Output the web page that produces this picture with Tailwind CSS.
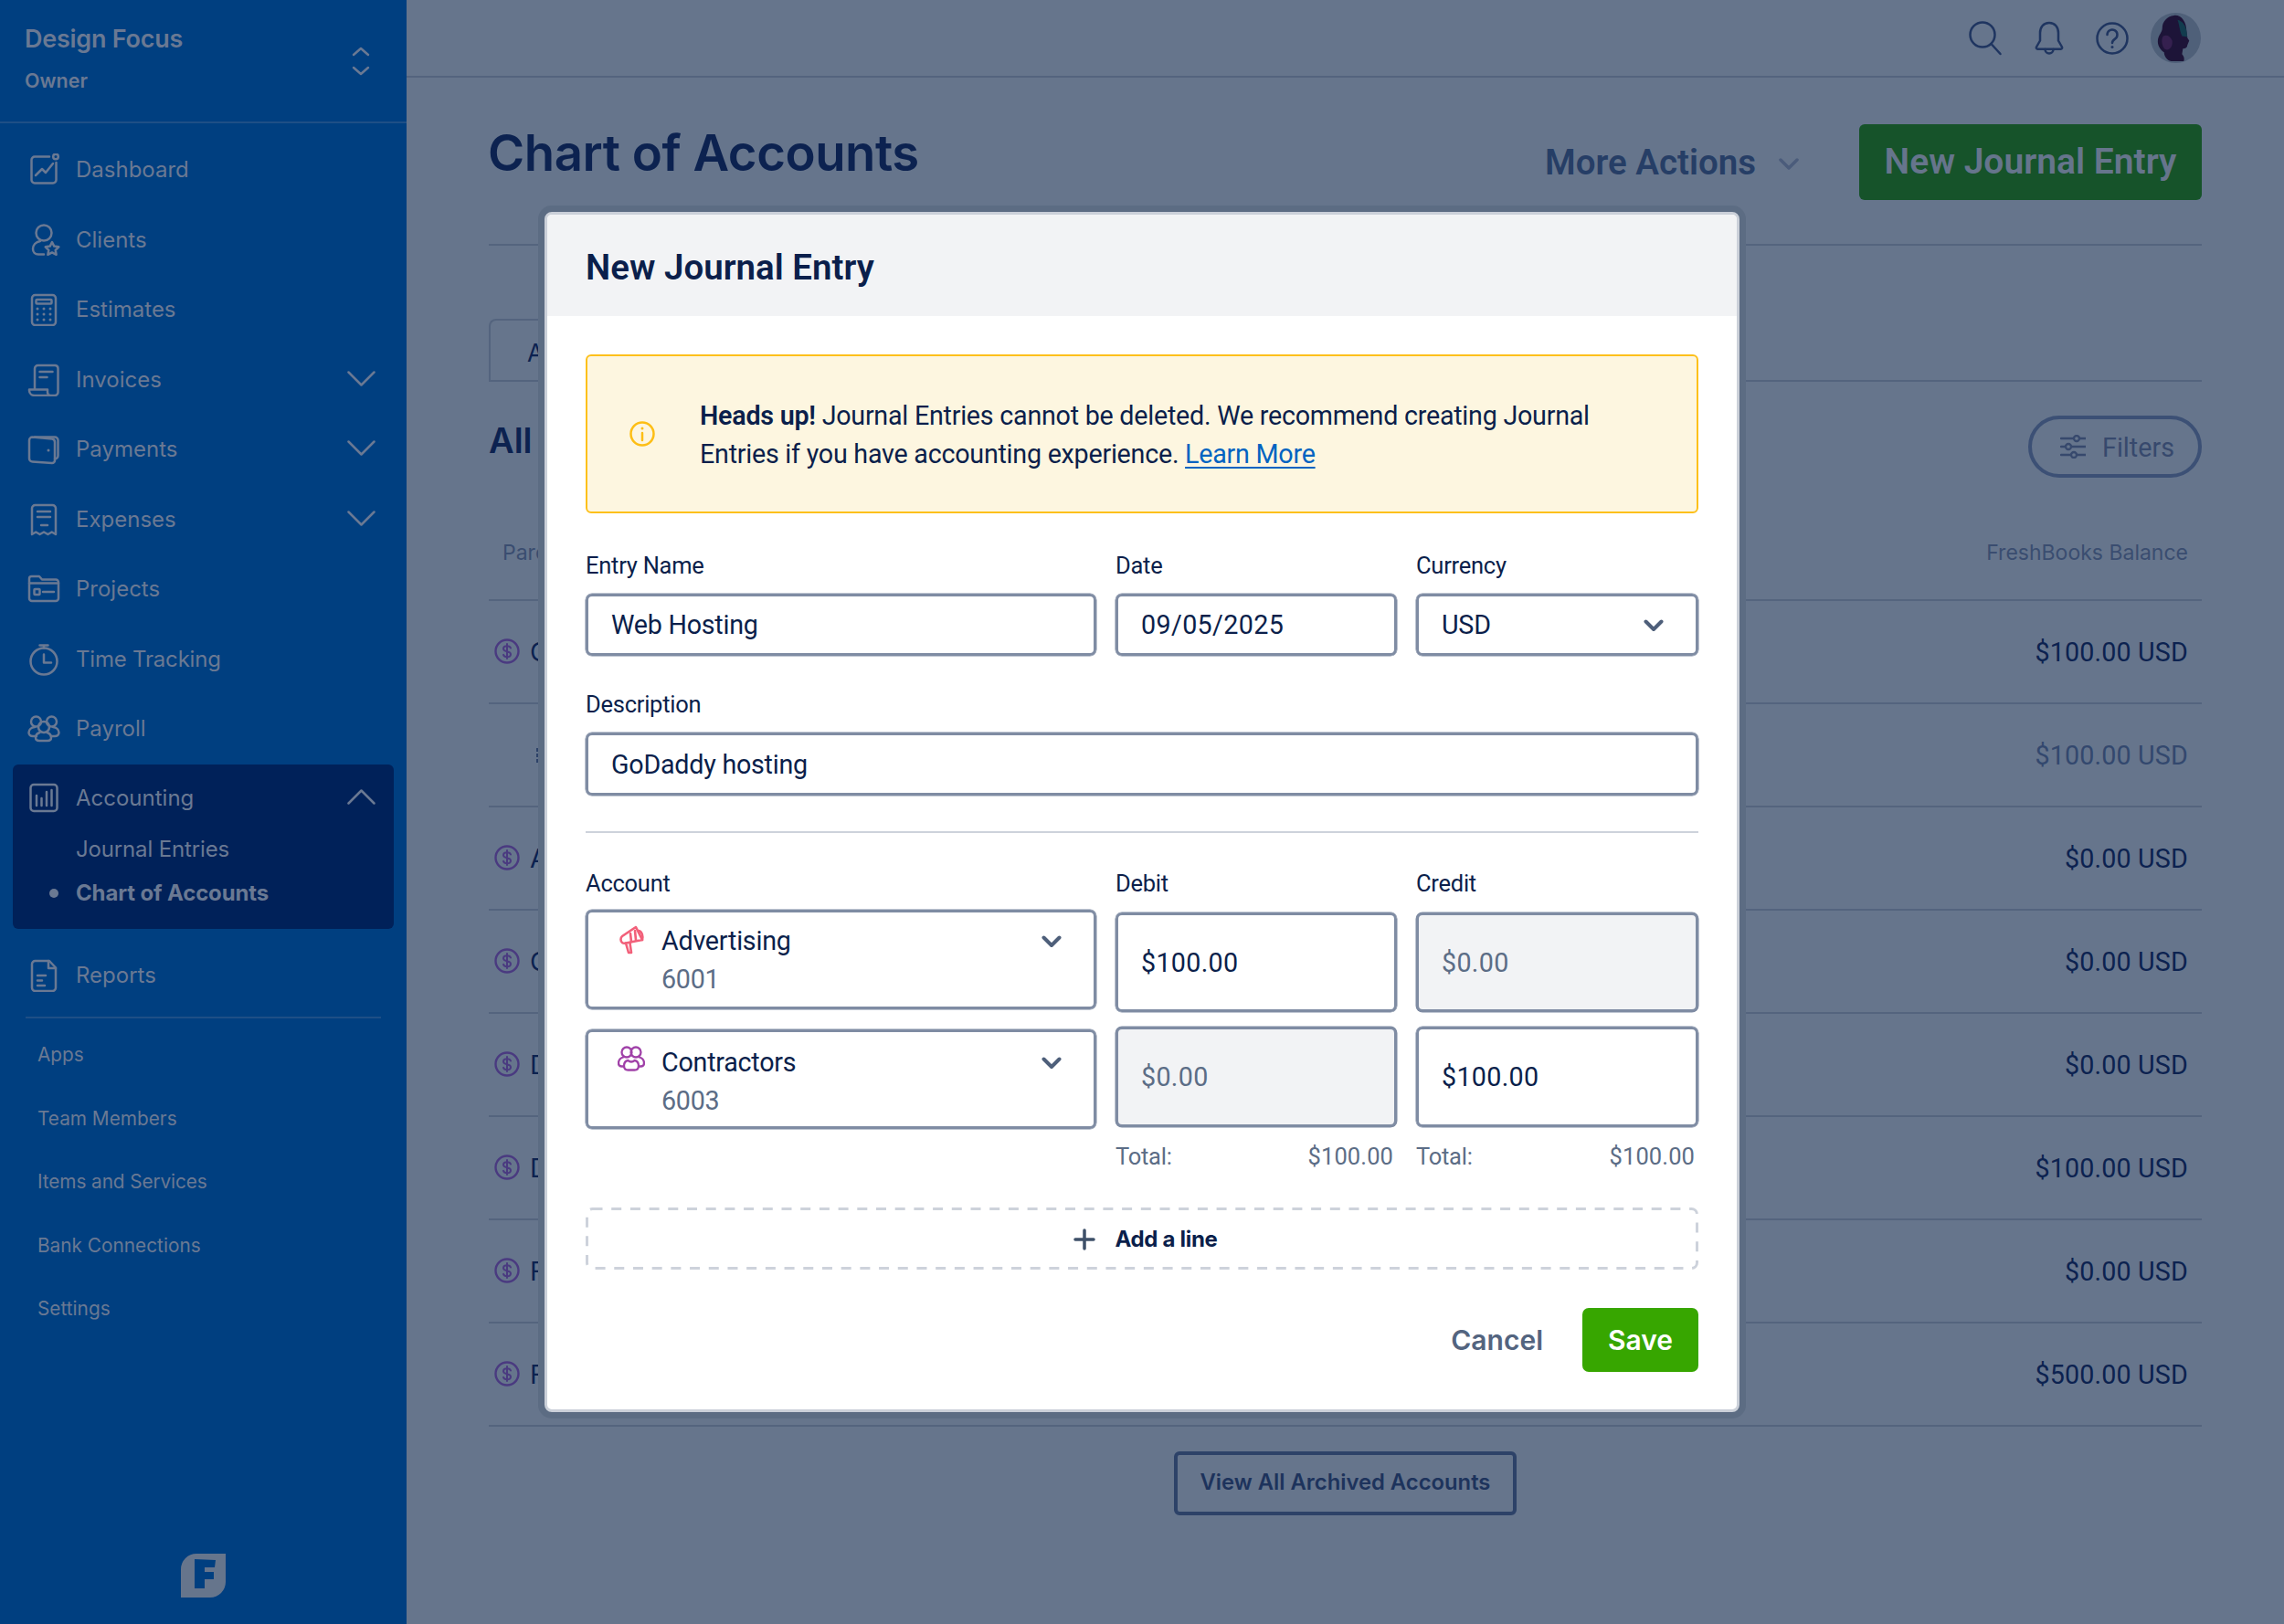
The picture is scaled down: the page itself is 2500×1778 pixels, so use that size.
<!doctype html>
<html lang="en">
<head>
<meta charset="utf-8">
<title>Chart of Accounts</title>
<script src="https://cdn.jsdelivr.net/npm/@tailwindcss/browser@4"></script>
</head>
<body class="m-0">
<div class="relative flex w-[2500px] h-[1778px] overflow-hidden bg-[#66758c] font-['Inter',sans-serif]">

  <!-- Sidebar -->
  <aside class="w-[445px] h-full shrink-0 bg-[#003f80] text-[#6a7993] flex flex-col relative">
    <div class="h-[135px] border-b-2 border-[#1e4f86] flex items-start justify-between pl-[27px] pr-[40px]">
      <div>
        <div class="mt-[25px] text-[27px] leading-[36px] font-semibold tracking-[-0.25px]">Design Focus</div>
        <div class="mt-[13px] text-[21.5px] leading-[28px] font-semibold">Owner</div>
      </div>
      <svg class="mt-[50px]" width="20" height="34" viewBox="0 0 20 34" fill="none" stroke="#6a7993" stroke-width="2.5" stroke-linecap="round" stroke-linejoin="round"><path d="M2 10 10 3l8 7M2 24l8 7 8-7"/></svg>
    </div>
    <nav class="pt-[13px] text-[24px] flex flex-col">
      <a class="h-[76.5px] pl-[30px] flex items-center gap-[17px]"><svg width="36" height="36" viewBox="0 0 36 36" fill="none" stroke="#6a7993" stroke-width="2.5" stroke-linecap="round" stroke-linejoin="round"><path d="M24 3.500H8A3.500 3.500 0 0 0 4.500 7v22A3.500 3.500 0 0 0 8 32.500h20a3.500 3.500 0 0 0 3.500-3.500V10"/><path d="m9 24 7-7 4 4 8-10"/><circle cx="31" cy="3.500" r="2.800"/></svg><span>Dashboard</span></a>
      <a class="h-[76.5px] pl-[30px] flex items-center gap-[17px]"><svg width="36" height="36" viewBox="0 0 36 36" fill="none" stroke="#6a7993" stroke-width="2.500" stroke-linecap="round" stroke-linejoin="round"><circle cx="18" cy="10" r="8.500"/><path d="M14 19c-5 1-8 4.500-8 8.500 0 3.500 2.500 6 6 6h6"/><path d="m27 20 2.300 4.600 5 .7-3.600 3.500.9 5-4.600-2.400-4.600 2.400.9-5-3.600-3.500 5-.7z"/></svg><span>Clients</span></a>
      <a class="h-[76.5px] pl-[30px] flex items-center gap-[17px]"><svg width="36" height="36" viewBox="0 0 36 36" fill="none" stroke="#6a7993" stroke-width="2.500" stroke-linecap="round" stroke-linejoin="round"><rect x="5" y="2" width="26" height="33" rx="3.500"/><rect x="9.500" y="7" width="17" height="4.500" rx="1"/><path stroke-width="3" d="M11 17h.01M18 17h.01M25 17h.01M11 23h.01M18 23h.01M25 23h.01M11 29h.01M18 29h.01M25 29h.01"/></svg><span>Estimates</span></a>
      <a class="h-[76.5px] pl-[30px] flex items-center gap-[17px] relative"><svg width="36" height="36" viewBox="0 0 36 36" fill="none" stroke="#6a7993" stroke-width="2.500" stroke-linecap="round" stroke-linejoin="round"><path d="M8 27V5.500A3.500 3.500 0 0 1 11.500 2h19A3.500 3.500 0 0 1 33.500 5.500v26a3.500 3.500 0 0 1-3.500 3.500H8c-3 0-6-2-6-5.500V28.500h20v3c0 2 1.500 3.500 3.500 3.500"/><path d="M13.500 9h14M13.500 15h8"/></svg><span>Invoices</span><svg class="absolute left-[380px] top-[28px]" width="31" height="17" viewBox="0 0 31 17" fill="none" stroke="#6a7993" stroke-width="2.500" stroke-linecap="round" stroke-linejoin="round"><path d="m1.500 1.500 14 14 14-14"/></svg></a>
      <a class="h-[76.5px] pl-[30px] flex items-center gap-[17px] relative"><svg width="36" height="36" viewBox="0 0 36 36" fill="none" stroke="#6a7993" stroke-width="2.500" stroke-linecap="round" stroke-linejoin="round"><path d="M5.500 4.500 27 6.500a3.500 3.500 0 0 1 3 3.500v20a3 3 0 0 1-3 3l-21.500-1.500A3.500 3.500 0 0 1 2 28V8a3.500 3.500 0 0 1 3.500-3.500Z"/><path d="M8 4.500h22a3.500 3.500 0 0 1 3.500 3.500v17a3.500 3.500 0 0 1-3.500 3.500"/><path stroke-width="3" d="M23 19h.01"/></svg><span>Payments</span><svg class="absolute left-[380px] top-[28px]" width="31" height="17" viewBox="0 0 31 17" fill="none" stroke="#6a7993" stroke-width="2.500" stroke-linecap="round" stroke-linejoin="round"><path d="m1.500 1.500 14 14 14-14"/></svg></a>
      <a class="h-[76.5px] pl-[30px] flex items-center gap-[17px] relative"><svg width="36" height="36" viewBox="0 0 36 36" fill="none" stroke="#6a7993" stroke-width="2.500" stroke-linecap="round" stroke-linejoin="round"><path d="M5 34V5.500A3.500 3.500 0 0 1 8.500 2h19A3.500 3.500 0 0 1 31 5.500V34l-4.300-2.500-4.300 2.500-4.400-2.500-4.400 2.500-4.300-2.500z"/><path d="M11 9h14M11 15h14M15 24h7"/></svg><span>Expenses</span><svg class="absolute left-[380px] top-[28px]" width="31" height="17" viewBox="0 0 31 17" fill="none" stroke="#6a7993" stroke-width="2.500" stroke-linecap="round" stroke-linejoin="round"><path d="m1.500 1.500 14 14 14-14"/></svg></a>
      <a class="h-[76.5px] pl-[30px] flex items-center gap-[17px]"><svg width="36" height="36" viewBox="0 0 36 36" fill="none" stroke="#6a7993" stroke-width="2.500" stroke-linecap="round" stroke-linejoin="round"><path d="M2 28V6.500A2.500 2.500 0 0 1 4.500 4h8.500l3 3.500H31A3 3 0 0 1 34 10.500v17.500a3 3 0 0 1-3 3H5A3 3 0 0 1 2 28Z"/><path d="M2 11.500h32M17 21h12"/><rect x="7.500" y="18" width="6" height="6" rx=".8"/></svg><span>Projects</span></a>
      <a class="h-[76.5px] pl-[30px] flex items-center gap-[17px]"><svg width="36" height="36" viewBox="0 0 36 36" fill="none" stroke="#6a7993" stroke-width="2.500" stroke-linecap="round" stroke-linejoin="round"><circle cx="18" cy="20" r="14.500"/><path d="M13.500 2.500h9M18 2.500v3M18 12.500v9h8"/></svg><span class="tracking-[-0.2px]">Time Tracking</span></a>
      <a class="h-[76.5px] pl-[30px] flex items-center gap-[17px]"><svg width="36" height="36" viewBox="0 0 36 36" fill="none" stroke="#6a7993" stroke-width="2.500" stroke-linecap="round" stroke-linejoin="round"><circle cx="9.500" cy="10" r="5.500"/><circle cx="26.500" cy="10" r="5.500"/><circle cx="18" cy="16" r="6"/><path d="M8 16c-4 .5-6.500 3-6.500 6 0 2.500 2 4 4.500 4h4M28 16c4 .5 6.500 3 6.500 6 0 2.500-2 4-4.500 4h-4"/><path d="M13.500 22c-3 1-4.500 3.500-4.500 5.500 0 2 1.500 3.500 4 3.500h9c2.500 0 4-1.500 4-3.500 0-2-1.500-4.500-4.500-5.500"/></svg><span>Payroll</span></a>
    </nav>
    <div class="mx-[14px] mt-0 h-[180px] bg-[#002159] rounded-[6px] relative">
      <a class="h-[74px] pl-[16px] flex items-center gap-[17px]"><svg width="36" height="36" viewBox="0 0 36 36" fill="none" stroke="#6a7993" stroke-width="2.500" stroke-linecap="round" stroke-linejoin="round"><rect x="3.500" y="3" width="29" height="29" rx="3.500"/><path d="M10 15v11M15.500 18v8M21 11v15M26.500 9v17"/></svg><span class="text-[24px]">Accounting</span></a>
      <svg class="absolute left-[366px] top-[27px]" width="31" height="17" viewBox="0 0 31 17" fill="none" stroke="#6a7993" stroke-width="2.500" stroke-linecap="round" stroke-linejoin="round"><path d="m1.500 15.500 14-14 14 14"/></svg>
      <div class="pl-[69px] text-[24px] leading-[36px] mt-[1px] tracking-[-0.15px]">Journal Entries</div>
      <div class="pl-[40px] mt-[12px] flex items-center text-[24px] leading-[36px] font-bold tracking-[-0.15px]"><span class="w-[10px] h-[10px] rounded-full bg-[#6a7993] mr-[19px]"></span>Chart of Accounts</div>
    </div>
    <a class="mt-[13px] h-[76.5px] pl-[30px] flex items-center gap-[17px] text-[24px]"><svg width="36" height="36" viewBox="0 0 36 36" fill="none" stroke="#6a7993" stroke-width="2.500" stroke-linecap="round" stroke-linejoin="round"><path d="M8.500 2H24l7 7.500V31.500A3.500 3.500 0 0 1 27.500 35h-19A3.500 3.500 0 0 1 5 31.500v-26A3.500 3.500 0 0 1 8.500 2Z"/><path d="M23 2v8h8M11 18h9M11 23.500h5M11 29h8"/></svg><span>Reports</span></a>
    <div class="mx-[28px] mt-[7px] border-t-2 border-[#1e4f86]"></div>
    <div class="pl-[41px] pt-[5px] text-[20.8px] flex flex-col">
      <a class="h-[69.5px] flex items-center">Apps</a>
      <a class="h-[69.5px] flex items-center">Team Members</a>
      <a class="h-[69.5px] flex items-center tracking-[-0.1px]">Items and Services</a>
      <a class="h-[69.5px] flex items-center">Bank Connections</a>
      <a class="h-[69.5px] flex items-center">Settings</a>
    </div>
    <svg class="absolute left-[198px] top-[1701px]" width="49" height="48" viewBox="0 0 49 48"><path fill-rule="evenodd" fill="#66758c" d="M17 0H49V31a17 17 0 0 1-17 17H0V17A17 17 0 0 1 17 0Z M15 6V38H26V28H36V20H26V15H37L38 7Z"/></svg>
  </aside>

  <!-- Main -->
  <main class="flex-1 flex flex-col min-w-0">
    <header class="h-[85px] border-b-2 border-[#54647e] flex items-center justify-end pr-[91px] shrink-0 gap-[33px]">
      <svg width="38" height="38" viewBox="0 0 38 38" fill="none" stroke="#1f3560" stroke-width="2.500" stroke-linecap="round"><circle cx="16" cy="15" r="13.500"/><path d="m25.500 25 10 11"/></svg>
      <svg width="36" height="38" viewBox="0 0 36 38" fill="none" stroke="#1f3560" stroke-width="2.500" stroke-linecap="round" stroke-linejoin="round"><path d="M18 2c-6.500 0-10 5-10 11v8.500L4 28.500a1.500 1.500 0 0 0 1.300 2.200h25.400a1.500 1.500 0 0 0 1.300-2.200l-4-7V13c0-6-3.500-11-10-11Z"/><path d="M13.500 31a4.500 4.500 0 0 0 9 0"/></svg>
      <svg width="36" height="36" viewBox="0 0 36 36" fill="none" stroke="#1f3560" stroke-width="2.500" stroke-linecap="round" stroke-linejoin="round"><circle cx="18" cy="18" r="16.500"/><path d="M12.500 14a5.500 5.500 0 1 1 8.500 4.600c-2 1.300-3 2.200-3 4.400"/><path stroke-width="3" d="M18 27.500h.01"/></svg>
      <svg class="-ml-[9px]" width="55" height="55" viewBox="0 0 56 56"><circle cx="28" cy="28" r="28" fill="#4f6079"/><path fill="#1d1438" d="M26 3c-8 1-13 7-13 14 0 5-5 8-5 15 0 6 4 10 7 12 0 4 3 9 8 10h14c1-3 0-6-2-8l1-6c3 0 5-1 5-4l2-5-2-3-1-8C40 10 34 2 26 3Z"/><path fill="#123c4e" d="M30 8c5 1 9 6 10 12l1 7-6-1c-3-7-3-13-5-18Z"/><path fill="#35204f" d="M14 26c4-2 8 0 10 5 1 5-2 11-7 10-4-1-6-11-3-15Z"/></svg>
    </header>

    <div class="px-[90px] flex flex-col flex-1">
      <div class="h-[184px] shrink-0 border-b-2 border-[#54647e] flex items-start justify-between pt-[51px]">
        <h1 class="text-[54.5px] leading-[64px] font-semibold text-[#0c2250] tracking-[-0.45px] -mt-[1px] -ml-[1px]">Chart of Accounts</h1>
        <div class="flex items-center font-['Roboto',sans-serif]">
          <span class="text-[38.5px] leading-[83px] font-semibold text-[#263e66]">More Actions</span>
          <svg class="ml-[25px] mr-[66px] mt-[4px]" width="22" height="14" viewBox="0 0 22 14" fill="none" stroke="#4b5c7b" stroke-width="3.500" stroke-linecap="round" stroke-linejoin="round"><path d="m2 2 9 9 9-9"/></svg>
          <button class="w-[375px] h-[83px] rounded-[6px] bg-[#16532a] text-[#66758c] text-[39px] font-semibold">New Journal Entry</button>
        </div>
      </div>
      <div class="h-[149px] shrink-0 border-b-2 border-[#54647e] flex items-end">
        <div class="w-[100px] h-[67px] border-t-2 border-l-2 border-[#54647e] rounded-tl-[8px] pl-[40px] pt-[17px] text-[26.5px] leading-[36px] text-[#0c2250]">A</div>
      </div>
      <div class="h-[105px] pt-[37px] shrink-0 flex items-center justify-between">
        <h2 class="text-[38px] font-semibold text-[#0c2250] mb-[14px]">All A</h2>
        <div class="w-[190px] h-[68px] pl-[5px] pt-[3px] rounded-full border-[4px] border-[#3c5075] flex items-center justify-center gap-[18px] text-[28.7px] font-['Roboto',sans-serif] text-[#37496d]">
          <svg class="-mt-[3px]" width="28" height="26" viewBox="0 0 28 26" fill="none" stroke="#37496d" stroke-width="2.300" stroke-linecap="round"><path d="M1 4h28M1 13h28M1 22h28" /><circle cx="18" cy="4" r="3" fill="#66758c"/><circle cx="9" cy="13" r="3" fill="#66758c"/><circle cx="15" cy="22" r="3" fill="#66758c"/></svg>
          <span>Filters</span>
        </div>
      </div>
      <div class="h-[135px] shrink-0 border-b-2 border-[#54647e] flex items-end justify-between pl-[15px] pr-[15px] pb-[36px] text-[23px] leading-[30px] text-[#3a4d70]">
        <span>Pare</span><span>FreshBooks Balance</span>
      </div>
      <div class="flex flex-col text-[28.7px] text-[#0c2250] font-['Roboto',sans-serif]">
        <div class="h-[113px] border-b-2 border-[#54647e] flex items-center justify-between pl-[6px] pr-[15px]"><span class="flex items-center gap-[11px] font-['Inter',sans-serif]"><svg width="28" height="28" viewBox="0 0 28 28" fill="none" stroke="#4a3a80" stroke-width="2.400" stroke-linecap="round"><circle cx="14" cy="14" r="12.500"/><path stroke-width="2" d="M18 10.500c-.5-1.500-2-2.300-4-2.300-2.200 0-4 1-4 3s1.800 2.500 4 3 4 1 4 3-1.800 3-4 3c-2 0-3.500-.8-4-2.300M14 6v16"/></svg><span>C</span></span><span class="tracking-[0.15px] pt-[2px]">$100.00 USD</span></div>
        <div class="h-[113px] border-b-2 border-[#54647e] flex items-center justify-between pl-[52px] pr-[15px]"><span class="flex flex-col gap-[2px]"><span class="w-[5px] h-[4px] bg-[#2d4268]"></span><span class="w-[5px] h-[4px] bg-[#2d4268]"></span><span class="w-[5px] h-[4px] bg-[#2d4268]"></span></span><span class="text-[#33486e] tracking-[0.15px] pt-[2px]">$100.00 USD</span></div>
        <div class="h-[113px] border-b-2 border-[#54647e] flex items-center justify-between pl-[6px] pr-[15px]"><span class="flex items-center gap-[11px] font-['Inter',sans-serif]"><svg width="28" height="28" viewBox="0 0 28 28" fill="none" stroke="#4a3a80" stroke-width="2.400" stroke-linecap="round"><circle cx="14" cy="14" r="12.500"/><path stroke-width="2" d="M18 10.500c-.5-1.500-2-2.300-4-2.300-2.200 0-4 1-4 3s1.800 2.500 4 3 4 1 4 3-1.800 3-4 3c-2 0-3.500-.8-4-2.300M14 6v16"/></svg><span>A</span></span><span class="tracking-[0.15px] pt-[2px]">$0.00 USD</span></div>
        <div class="h-[113px] border-b-2 border-[#54647e] flex items-center justify-between pl-[6px] pr-[15px]"><span class="flex items-center gap-[11px] font-['Inter',sans-serif]"><svg width="28" height="28" viewBox="0 0 28 28" fill="none" stroke="#4a3a80" stroke-width="2.400" stroke-linecap="round"><circle cx="14" cy="14" r="12.500"/><path stroke-width="2" d="M18 10.500c-.5-1.500-2-2.300-4-2.300-2.200 0-4 1-4 3s1.800 2.500 4 3 4 1 4 3-1.800 3-4 3c-2 0-3.500-.8-4-2.300M14 6v16"/></svg><span>C</span></span><span class="tracking-[0.15px] pt-[2px]">$0.00 USD</span></div>
        <div class="h-[113px] border-b-2 border-[#54647e] flex items-center justify-between pl-[6px] pr-[15px]"><span class="flex items-center gap-[11px] font-['Inter',sans-serif]"><svg width="28" height="28" viewBox="0 0 28 28" fill="none" stroke="#4a3a80" stroke-width="2.400" stroke-linecap="round"><circle cx="14" cy="14" r="12.500"/><path stroke-width="2" d="M18 10.500c-.5-1.500-2-2.300-4-2.300-2.200 0-4 1-4 3s1.800 2.500 4 3 4 1 4 3-1.800 3-4 3c-2 0-3.500-.8-4-2.300M14 6v16"/></svg><span>D</span></span><span class="tracking-[0.15px] pt-[2px]">$0.00 USD</span></div>
        <div class="h-[113px] border-b-2 border-[#54647e] flex items-center justify-between pl-[6px] pr-[15px]"><span class="flex items-center gap-[11px] font-['Inter',sans-serif]"><svg width="28" height="28" viewBox="0 0 28 28" fill="none" stroke="#4a3a80" stroke-width="2.400" stroke-linecap="round"><circle cx="14" cy="14" r="12.500"/><path stroke-width="2" d="M18 10.500c-.5-1.500-2-2.300-4-2.300-2.200 0-4 1-4 3s1.800 2.500 4 3 4 1 4 3-1.800 3-4 3c-2 0-3.500-.8-4-2.300M14 6v16"/></svg><span>D</span></span><span class="tracking-[0.15px] pt-[2px]">$100.00 USD</span></div>
        <div class="h-[113px] border-b-2 border-[#54647e] flex items-center justify-between pl-[6px] pr-[15px]"><span class="flex items-center gap-[11px] font-['Inter',sans-serif]"><svg width="28" height="28" viewBox="0 0 28 28" fill="none" stroke="#4a3a80" stroke-width="2.400" stroke-linecap="round"><circle cx="14" cy="14" r="12.500"/><path stroke-width="2" d="M18 10.500c-.5-1.500-2-2.300-4-2.300-2.200 0-4 1-4 3s1.800 2.500 4 3 4 1 4 3-1.800 3-4 3c-2 0-3.500-.8-4-2.300M14 6v16"/></svg><span>F</span></span><span class="tracking-[0.15px] pt-[2px]">$0.00 USD</span></div>
        <div class="h-[113px] border-b-2 border-[#54647e] flex items-center justify-between pl-[6px] pr-[15px]"><span class="flex items-center gap-[11px] font-['Inter',sans-serif]"><svg width="28" height="28" viewBox="0 0 28 28" fill="none" stroke="#4a3a80" stroke-width="2.400" stroke-linecap="round"><circle cx="14" cy="14" r="12.500"/><path stroke-width="2" d="M18 10.500c-.5-1.500-2-2.300-4-2.300-2.200 0-4 1-4 3s1.800 2.500 4 3 4 1 4 3-1.800 3-4 3c-2 0-3.500-.8-4-2.300M14 6v16"/></svg><span>F</span></span><span class="tracking-[0.15px] pt-[2px]">$500.00 USD</span></div>
      </div>
      <div class="flex justify-center mt-[27px]">
        <button class="w-[375px] h-[70px] pb-[3px] rounded-[6px] border-[4px] border-[#2d4268] text-[23.8px] font-semibold text-[#1d335c]">View All Archived Accounts</button>
      </div>
    </div>
  </main>

  <!-- Modal -->
  <div class="absolute left-[596px] top-[232px] w-[1308px] h-[1314px] rounded-[8px] border-[3px] border-[#cbd0d9] bg-white shadow-[0_0_0_7px_#5c6c83] overflow-hidden font-['Roboto',sans-serif] text-[#0b1f4b] tracking-[-0.25px]">
    <div class="h-[111px] bg-[#f2f3f5] pl-[42px] pt-[4px] flex items-center"><h2 class="text-[38.5px] font-semibold tracking-normal">New Journal Entry</h2></div>
    <div class="px-[42px]">
      <div class="mt-[42px] h-[174px] rounded-[6px] border-2 border-[#fdc01b] bg-[#fdf6e0] flex items-center text-[28.7px] leading-[42px]">
        <svg class="ml-[46px] mr-[49px] shrink-0" width="28" height="28" viewBox="0 0 28 28" fill="none" stroke="#fdbe15" stroke-width="2.500" stroke-linecap="round"><circle cx="14" cy="14" r="12.500"/><path d="M14 13v8"/><path stroke-width="3" d="M14 8h.01"/></svg>
        <p class="w-[1060px] pt-[2px]"><strong class="font-semibold">Heads up!</strong> Journal Entries cannot be deleted. We recommend creating Journal Entries if you have accounting experience. <a class="text-[#0063c1] underline underline-offset-4">Learn More</a></p>
      </div>

      <div class="mt-[42px] grid grid-cols-[559px_308px_309px] gap-x-[21px] text-[25.5px]">
        <div><div class="h-[30px] leading-[30px]">Entry Name</div><div class="mt-[16px] h-[68px] pt-[2px] rounded-[7px] border-[3px] border-[#7f8ca3] shadow-[0_0_0_0.5px_#7f8ca3] pl-[25px] flex items-center text-[28.7px]">Web Hosting</div></div>
        <div><div class="h-[30px] leading-[30px]">Date</div><div class="mt-[16px] h-[68px] pt-[2px] rounded-[7px] border-[3px] border-[#7f8ca3] shadow-[0_0_0_0.5px_#7f8ca3] pl-[25px] flex items-center text-[28.7px] tracking-[0.35px]">09/05/2025</div></div>
        <div><div class="h-[30px] leading-[30px]">Currency</div><div class="mt-[16px] h-[68px] rounded-[7px] border-[3px] border-[#7f8ca3] shadow-[0_0_0_0.5px_#7f8ca3] pl-[25px] pr-[35px] flex items-center justify-between text-[28.7px]"><span class="pt-[2px]">USD</span><svg class="mt-[2px]" width="22" height="14" viewBox="0 0 22 14" fill="none" stroke="#4e5f7a" stroke-width="4" stroke-linecap="round" stroke-linejoin="round"><path d="m2.500 2.500 8.500 8.500 8.500-8.500"/></svg></div></div>
      </div>

      <div class="mt-[38px] text-[25.5px] h-[30px] leading-[30px]">Description</div>
      <div class="mt-[16px] h-[69px] pt-[2px] rounded-[7px] border-[3px] border-[#7f8ca3] shadow-[0_0_0_0.5px_#7f8ca3] pl-[25px] flex items-center text-[28.7px]">GoDaddy hosting</div>

      <div class="mt-[39px] border-t-2 border-[#cdd2db]"></div>

      <div class="mt-[40px] grid grid-cols-[559px_308px_309px] gap-x-[21px] text-[25.5px]">
        <div>
          <div class="h-[30px] leading-[30px]">Account</div>
          <div class="mt-[14px] h-[109px] rounded-[7px] border-[3px] border-[#7f8ca3] shadow-[0_0_0_0.5px_#7f8ca3] relative pl-[80px] pt-[10px] text-[28.7px] leading-[42px]">
            <svg class="absolute left-[33px] top-[14px]" width="30" height="32" viewBox="0 0 30 32" fill="none" stroke="#f2607a" stroke-width="2.600" stroke-linecap="round" stroke-linejoin="round"><path d="M19 2 4 12c-2 1.500-2 5.500 0 7 1 .8 2.500 1 4 .5L26 16Z"/><path d="M8 19.500 11 30h3l-1.500-10.500M22 6c4 1 5 6 4 10M13 9l1 9M18 6l1 10"/></svg>
            <div>Advertising</div><div class="text-[#5c6d86]">6001</div>
            <svg class="absolute left-[496px] top-[25px]" width="22" height="14" viewBox="0 0 22 14" fill="none" stroke="#4e5f7a" stroke-width="4" stroke-linecap="round" stroke-linejoin="round"><path d="m2.500 2.500 8.500 8.500 8.500-8.500"/></svg>
          </div>
          <div class="mt-[22px] h-[109px] rounded-[7px] border-[3px] border-[#7f8ca3] shadow-[0_0_0_0.5px_#7f8ca3] relative pl-[80px] pt-[12px] text-[28.7px] leading-[42px]">
            <svg class="absolute left-[32px] top-[15px]" width="30" height="28" viewBox="0 0 30 28" fill="none" stroke="#a041a8" stroke-width="2.300" stroke-linecap="round" stroke-linejoin="round"><circle cx="10" cy="7" r="5.500"/><circle cx="20" cy="7" r="5.500"/><path d="M6 12.500c-3 1-5 3.500-5 6.500 0 2 1.500 3.500 3.500 3.500H7M24 12.500c3 1 5 3.500 5 6.500 0 2-1.500 3.500-3.500 3.500H23"/><path d="M11.500 16c-3 .5-4.500 3-4.500 6 0 3 2 4.500 4.500 4.500h7c2.500 0 4.500-1.500 4.500-4.500s-1.500-5.500-4.500-6a4.800 4.800 0 0 1-7 0Z"/></svg>
            <div>Contractors</div><div class="text-[#5c6d86]">6003</div>
            <svg class="absolute left-[496px] top-[27px]" width="22" height="14" viewBox="0 0 22 14" fill="none" stroke="#4e5f7a" stroke-width="4" stroke-linecap="round" stroke-linejoin="round"><path d="m2.500 2.500 8.500 8.500 8.500-8.500"/></svg>
          </div>
        </div>
        <div>
          <div class="h-[30px] leading-[30px]">Debit</div>
          <div class="mt-[17px] h-[109px] pt-[2px] rounded-[7px] border-[3px] border-[#7f8ca3] shadow-[0_0_0_0.5px_#7f8ca3] pl-[25px] flex items-center text-[28.7px] tracking-[0.3px]">$100.00</div>
          <div class="mt-[16px] h-[110px] pt-[2px] rounded-[7px] border-[3px] border-[#7f8ca3] shadow-[0_0_0_0.5px_#7f8ca3] bg-[#f2f3f5] text-[#5c6d86] pl-[25px] flex items-center text-[28.7px] tracking-[0.3px]">$0.00</div>
          <div class="mt-[17px] h-[30px] leading-[30px] pr-[4px] flex justify-between text-[#5c6d86]"><span>Total:</span><span class="tracking-[0.1px]">$100.00</span></div>
        </div>
        <div>
          <div class="h-[30px] leading-[30px]">Credit</div>
          <div class="mt-[17px] h-[109px] pt-[2px] rounded-[7px] border-[3px] border-[#7f8ca3] shadow-[0_0_0_0.5px_#7f8ca3] bg-[#f2f3f5] text-[#5c6d86] pl-[25px] flex items-center text-[28.7px] tracking-[0.3px]">$0.00</div>
          <div class="mt-[16px] h-[110px] pt-[2px] rounded-[7px] border-[3px] border-[#7f8ca3] shadow-[0_0_0_0.5px_#7f8ca3] pl-[25px] flex items-center text-[28.7px] tracking-[0.3px]">$100.00</div>
          <div class="mt-[17px] h-[30px] leading-[30px] pr-[4px] flex justify-between text-[#5c6d86]"><span>Total:</span><span class="tracking-[0.1px]">$100.00</span></div>
        </div>
      </div>

      <div class="relative mt-[41px] h-[68px] pl-[8px] pt-[1px] flex items-center justify-center gap-[21px] font-['Inter',sans-serif] text-[24px] font-bold">
        <svg class="absolute inset-0" width="1218" height="68" viewBox="0 0 1218 68" fill="none"><rect x="1.500" y="1.500" width="1215" height="65" rx="6" stroke="#cdd2db" stroke-width="3" stroke-dasharray="11 9.700"/></svg>
        <svg width="24" height="24" viewBox="0 0 24 24" fill="none" stroke="#3e5069" stroke-width="3.500" stroke-linecap="round"><path d="M12 2v20M2 12h20"/></svg>
        <span class="tracking-[-0.3px]">Add a line</span>
      </div>

      <div class="mt-[42px] flex justify-end items-center gap-[43px] font-['Inter',sans-serif] text-[30px] font-semibold tracking-normal">
        <span class="text-[#53647f]">Cancel</span>
        <button class="w-[127px] h-[70px] rounded-[7px] bg-[#37a600] text-white">Save</button>
      </div>
    </div>
  </div>
</div>
</body>
</html>
